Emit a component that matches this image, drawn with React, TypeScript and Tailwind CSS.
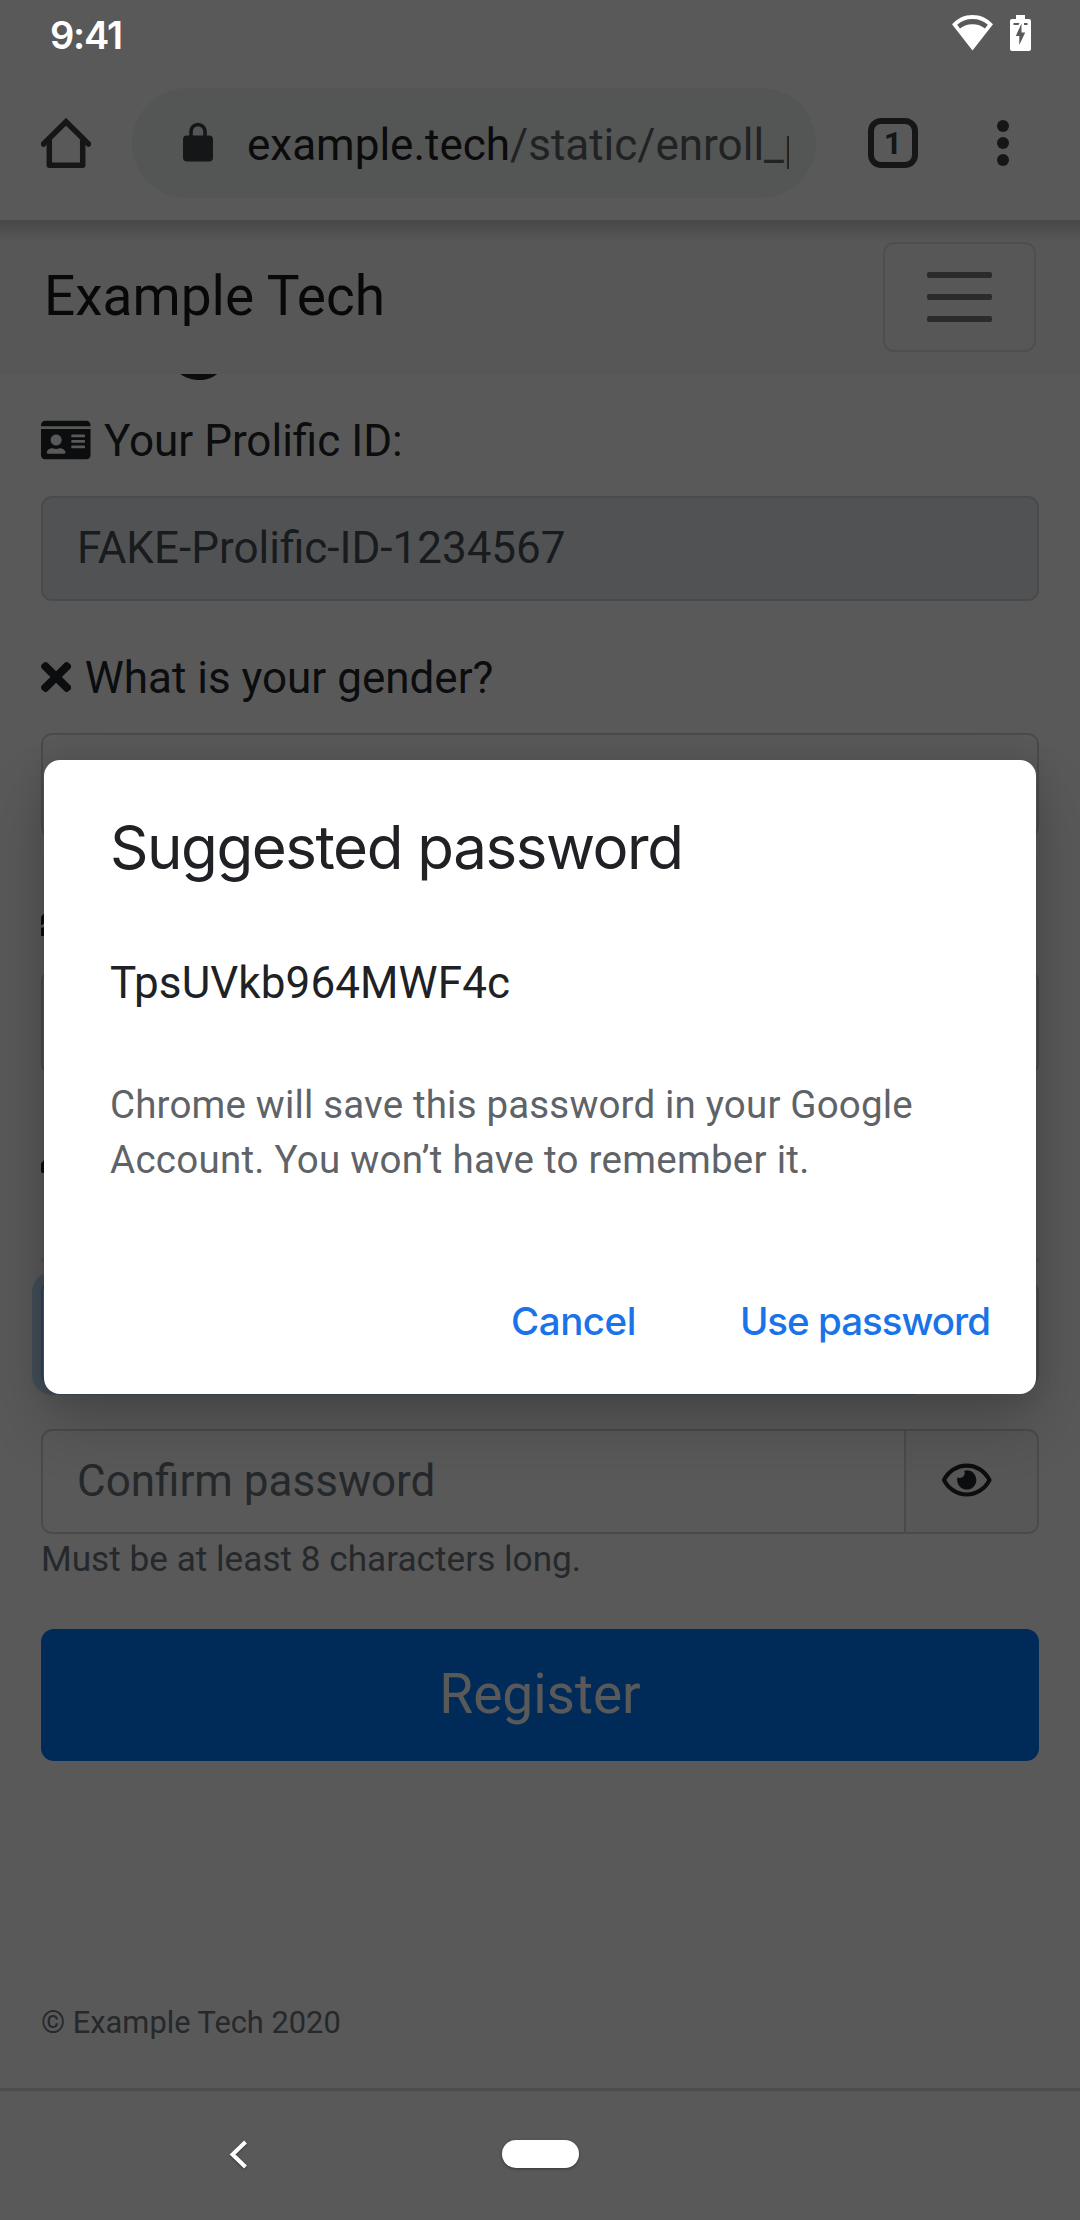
import type { ReactNode } from "react";
import { FaBirthdayCake, FaIdCard, FaKey, FaRegEye, FaTimes } from "react-icons/fa";

const inputBox = "h-[105px] shrink-0 border-2 text-[44px]";

function StatusBar() {
  return (
    <div className="relative z-20 flex h-[66px] shrink-0 items-start justify-between pr-[49px] pl-[50px] text-white">
      <span className="mt-[11px] font-['Inter'] text-[38px] leading-[48px] font-semibold tracking-[-1.2px]">9:41</span>
      <div className="mt-[15px] flex items-start gap-[17px]">
        <svg width="41" height="36" viewBox="0 0 41 36" fill="currentColor">
          <path
            fillRule="evenodd"
            d="M20.5 0C12.5 0 5.6 3.2 0 9.3L20.5 35.500L41 9.300C35.400 3.200 28.500 0 20.500 0ZM20.500 4C26.500 4 31.600 6 35.800 9.800L33 13.600C29.600 10.800 25.300 9.300 20.500 9.300S11.400 10.800 8 13.600L5.200 9.800C9.400 6 14.500 4 20.500 4Z"
          />
        </svg>
        <svg width="21" height="36" viewBox="0 0 21 36" fill="currentColor">
          <path
            fillRule="evenodd"
            d="M6 0H15V4H19Q21 4 21 6V34Q21 36 19 36H2Q0 36 0 34V6Q0 4 2 4H6ZM3.500 8V10H8.500L9.500 8ZM14 8V10H17.500V8ZM11.500 8.500L5.800 21H9.300V30L15.200 17.500H11.500Z"
          />
        </svg>
      </div>
    </div>
  );
}

function Toolbar() {
  return (
    <div className="flex h-[154px] shrink-0 items-start bg-white text-[#3c4043]">
      <svg className="mt-[52px] ml-[41px] shrink-0" width="50" height="50" viewBox="0 0 50 50" fill="none" stroke="currentColor" strokeWidth="5.500" strokeLinejoin="round">
        <path d="M8.300 22V47.200H41.700V22" />
        <path d="M2.500 26L25 3.700L47.500 26" strokeLinecap="round" strokeLinejoin="miter" />
      </svg>
      <div className="mt-[22px] ml-[41px] flex h-[110px] w-[684px] shrink-0 items-center rounded-full bg-[#f1f3f4] pr-[27px] pl-[51px]">
        <svg className="-mt-[2px] shrink-0" width="30" height="40" viewBox="0 0 30 40">
          <rect y="13.500" width="30" height="26" rx="4" fill="currentColor" />
          <path d="M8 15V9.500a7 7 0 0 1 14 0V15" fill="none" stroke="currentColor" strokeWidth="3.600" />
        </svg>
        <div className="mt-[3px] ml-[34px] flex-1 overflow-hidden text-[44px] leading-[60px] whitespace-nowrap text-[#5f6368]">
          <span className="text-[#202124]">example.tech</span>/static/enroll_page
        </div>
      </div>
      <div className="mt-[52px] ml-[52px] flex size-[50px] shrink-0 items-center justify-center rounded-[13px] border-[6px] border-current text-[32px] leading-none font-bold">
        1
      </div>
      <div className="mt-[54px] ml-[79px] flex flex-col gap-[5px]">
        <span className="size-[12px] rounded-full bg-current" />
        <span className="size-[12px] rounded-full bg-current" />
        <span className="size-[12px] rounded-full bg-current" />
      </div>
    </div>
  );
}

function SiteHeader() {
  return (
    <div className="relative flex h-[154px] shrink-0 items-center justify-between bg-[#f8f9fa] px-[44px]">
      <div className="absolute inset-x-0 top-0 h-[22px] bg-linear-to-b from-black/18 to-transparent" />
      <span className="-mt-[2px] text-[55px] leading-[82px] text-black/90">Example Tech</span>
      <div className="flex h-[110px] w-[153px] flex-col items-center justify-center gap-[16px] rounded-[11px] border-2 border-black/10">
        <span className="h-[6px] w-[65px] rounded-[2px] bg-black/50" />
        <span className="h-[6px] w-[65px] rounded-[2px] bg-black/50" />
        <span className="h-[6px] w-[65px] rounded-[2px] bg-black/50" />
      </div>
    </div>
  );
}

function Label({ icon, children }: { icon: ReactNode; children?: ReactNode }) {
  return (
    <div className="h-[66px] shrink-0 text-[44px] leading-[66px] whitespace-nowrap">
      {icon} {children}
    </div>
  );
}

function PasswordRow({ placeholder, focused = false }: { placeholder: string; focused?: boolean }) {
  return (
    <div className="flex shrink-0">
      <div
        className={
          focused
            ? `${inputBox} relative w-[865px] rounded-l-[11px] border-[#80bdff] pl-[34px] leading-[101px] text-[#6c757d] shadow-[0_0_0_9px_rgba(0,123,255,0.25)]`
            : `${inputBox} w-[865px] rounded-l-[11px] border-[#ced4da] pl-[34px] leading-[101px] text-[#6c757d]`
        }
      >
        {placeholder}
      </div>
      <div className={`${inputBox} -ml-[2px] flex flex-1 items-center rounded-r-[11px] border-[#ced4da] bg-[#f8f9fa] pb-[4px] pl-[36px]`}>
        <FaRegEye className="h-[44px] w-[49.5px]" />
      </div>
    </div>
  );
}

function RegisterForm() {
  return (
    <div className="flex flex-1 flex-col bg-white px-[41px] text-[#212529]">
      <div className="h-[34px] shrink-0 overflow-hidden">
        <h1 className="-mt-[109px] text-[110px] leading-[110px] font-medium">Registration</h1>
      </div>
      <Label icon={<FaIdCard className="mr-[2.500px] inline h-[44px] w-[49.5px] align-[-0.125em]" />}>Your Prolific ID:</Label>
      <div className={`${inputBox} mt-[22px] mb-[44px] rounded-[11px] border-[#ced4da] bg-[#e9ecef] pl-[34px] leading-[101px] text-[#495057]`}>
        FAKE-Prolific-ID-1234567
      </div>
      <Label icon={<FaTimes className="mr-[2.500px] inline h-[44px] w-[30.250px] align-[-0.125em]" />}>What is your gender?</Label>
      <div className={`${inputBox} mt-[22px] mb-[44px] rounded-[11px] border-[#ced4da]`} />
      <Label icon={<FaBirthdayCake className="inline h-[44px] w-[38.500px] align-[-0.125em]" />} />
      <div className={`${inputBox} mt-[22px] mb-[44px] rounded-[11px] border-[#ced4da]`} />
      <Label icon={<FaKey className="inline size-[44px] align-[-0.125em]" />} />
      <div className="mt-[73px] mb-[18px] h-[5px] shrink-0 bg-[#e9ecef]" />
      <PasswordRow placeholder="" focused />
      <div className="h-[43px] shrink-0" />
      <PasswordRow placeholder="Confirm password" />
      <p className="-mt-px text-[35.200px] leading-[53px] text-[#6c757d]">Must be at least 8 characters long.</p>
      <div className="mt-[43px] h-[132px] shrink-0 rounded-[13px] bg-[#007bff] text-center text-[55px] leading-[130px] text-white">
        Register
      </div>
      <p className="mt-[239px] text-[30.800px] leading-[46px] text-[#6c757d]">© Example Tech 2020</p>
    </div>
  );
}

function NavBar() {
  return (
    <div className="relative z-20 flex h-[132px] shrink-0 items-start border-t-[3px] border-[#4d4d4d] bg-[#595959]">
      <svg className="mt-[49px] ml-[229px] drop-shadow-[0_1px_1px_rgba(0,0,0,0.4)]" width="19" height="29" viewBox="0 0 19 29" fill="none" stroke="white" strokeWidth="4">
        <path d="M16.500 2L3.500 14.500L16.500 27" />
      </svg>
      <div className="mt-[49px] ml-[254px] h-[28px] w-[77px] rounded-full bg-white shadow-[0_1px_3px_rgba(0,0,0,0.4)]" />
    </div>
  );
}

function PasswordDialog() {
  return (
    <div className="absolute top-[760px] left-[44px] z-30 flex h-[634px] w-[992px] flex-col rounded-[16px] bg-white px-[66px] text-[#202124] shadow-[0_30px_60px_rgba(0,0,0,0.2),0_0_28px_rgba(0,0,0,0.1)]">
      <h2 className="mt-[49px] font-['Inter'] text-[60px] leading-[76px] tracking-[-1.450px] whitespace-nowrap">Suggested password</h2>
      <p className="mt-[65px] text-[44px] leading-[66px] tracking-[0.1px]">TpsUVkb964MWF4c</p>
      <p className="mt-[61px] text-[38.500px] leading-[55px] tracking-[0.170px] text-[#5f6368]">
        Chrome will save this password in your Google
        <br />
        <span className="tracking-[0.270px]">Account. You won’t have to remember it.</span>
      </p>
      <div className="mt-[109px] -mr-[20px] flex justify-end gap-[104px] font-['Inter'] text-[38.500px] leading-[50px] font-medium text-[#1a73e8]">
        <span className="tracking-[-0.500px]">Cancel</span>
        <span className="tracking-[-1px]">Use password</span>
      </div>
    </div>
  );
}

export default function App() {
  return (
    <div className="relative flex h-[2220px] w-[1080px] flex-col overflow-hidden bg-white font-['Roboto',sans-serif]">
      <StatusBar />
      <Toolbar />
      <SiteHeader />
      <RegisterForm />
      <NavBar />
      <div className="absolute inset-0 z-10 bg-black/65" />
      <PasswordDialog />
    </div>
  );
}
